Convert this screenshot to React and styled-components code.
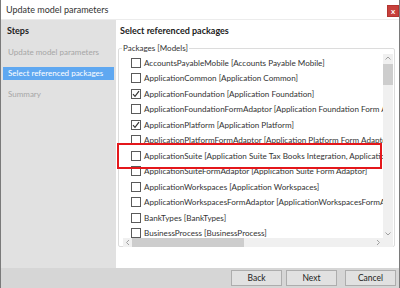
import React from 'react';
import styled, { createGlobalStyle } from 'styled-components';

const GlobalStyle = createGlobalStyle`
  html, body {
    margin: 0;
    padding: 0;
    background: #ffffff;
  }
  body {
    font-family: Lato, "Noto Sans", sans-serif;
  }
`;

const Window = styled.div`
  width: 400px;
  height: 288px;
  box-sizing: border-box;
  border-left: 1px solid #7a7a7a;
  border-right: 1px solid #7a7a7a;
  display: flex;
  flex-direction: column;
  overflow: hidden;
  position: relative;
  color: #222;
`;

const TitleBar = styled.div`
  height: 19px;
  flex: none;
  display: flex;
  align-items: center;
  justify-content: space-between;
  padding: 0 0 0 5px;
  border-bottom: 1px solid #ececec;
  font-size: 9px;
  color: #333;
`;

const CloseButton = styled.div`
  width: 12px;
  height: 12px;
  margin-top: 2px;
  background: #c7403c;
  color: #fff;
  font-size: 8px;
  font-weight: bold;
  line-height: 11px;
  text-align: center;
  border: 1px solid #b33430;
  box-sizing: border-box;
`;

const Body = styled.div`
  flex: 1;
  display: flex;
  min-height: 0;
`;

const Sidebar = styled.div`
  width: 115px;
  flex: none;
  background: #e1e1e1;
  padding: 4px 2px 0 2px;
  box-sizing: border-box;
`;

const SidebarTitle = styled.div`
  font-weight: bold;
  font-size: 9px;
  padding: 0 0 0 4px;
  height: 14px;
  line-height: 14px;
  margin-bottom: 8px;
`;

const StepItem = styled.div`
  height: 13px;
  line-height: 13px;
  font-size: 8px;
  padding-left: 5px;
  margin-bottom: 8px;
  white-space: nowrap;
  color: ${(p) => (p.active ? '#ffffff' : '#a6a6a6')};
  background: ${(p) => (p.active ? '#5fa8f1' : 'transparent')};
  width: 111px;
  box-sizing: border-box;
`;

const Content = styled.div`
  flex: 1;
  background: #ffffff;
  padding: 4px 4px 0 2px;
  display: flex;
  flex-direction: column;
  min-width: 0;
`;

const Heading = styled.div`
  font-weight: bold;
  font-size: 9px;
  height: 14px;
  line-height: 14px;
  padding-left: 2px;
  margin-bottom: 5px;
`;

const GroupBox = styled.fieldset`
  margin: 0;
  padding: 0 1px 2px 4px;
  border: 1px solid #dcdcdc;
  border-radius: 2px;
  height: 204px;
  box-sizing: border-box;
  min-width: 0;
`;

const Legend = styled.legend`
  font-size: 8px;
  padding: 0 1px;
  margin-left: -1px;
  color: #333;
  line-height: 10px;
`;

const ListBox = styled.div`
  position: relative;
  height: 193px;
  margin-top: 1px;
  display: grid;
  grid-template-columns: 1fr 10px;
  grid-template-rows: 1fr 9px;
  overflow: hidden;
`;

const Rows = styled.div`
  overflow: hidden;
  padding-left: 8px;
  padding-top: 1px;
`;

const Row = styled.div`
  height: 15.5px;
  display: flex;
  align-items: center;
  gap: 3px;
  white-space: nowrap;
  font-size: 8.1px;
  color: #333;
`;

const Box = styled.span`
  width: 10px;
  height: 10px;
  flex: none;
  border: 1px solid #5a5a5a;
  box-sizing: border-box;
  background: #fff;
  display: flex;
  align-items: center;
  justify-content: center;
`;

const VScroll = styled.div`
  background: #f0f0f0;
  display: flex;
  flex-direction: column;
  align-items: center;
`;

const HScroll = styled.div`
  background: #f0f0f0;
  display: flex;
  align-items: center;
`;

const Corner = styled.div`
  background: #f0f0f0;
`;

const Arrow = styled.div`
  width: 10px;
  height: 9px;
  flex: none;
  display: flex;
  align-items: center;
  justify-content: center;
`;

const VThumb = styled.div`
  width: 10px;
  height: 21px;
  background: #cdcdcd;
  margin-top: 1px;
`;

const Spacer = styled.div`
  flex: 1;
`;

const HThumb = styled.div`
  width: 112px;
  height: 9px;
  background: #cdcdcd;
  margin-left: -1px;
`;

const Highlight = styled.div`
  position: absolute;
  left: 116px;
  top: 143px;
  width: 265px;
  height: 26px;
  border: 2px solid #e4171b;
  box-sizing: border-box;
  pointer-events: none;
`;

const Footer = styled.div`
  height: 20px;
  flex: none;
  background: #d6d6d6;
  display: flex;
  justify-content: flex-end;
  align-items: center;
  padding-right: 3px;
  gap: 4px;
`;

const Button = styled.button`
  width: 51px;
  height: 16px;
  margin: 0;
  padding: 0;
  background: #e1e1e1;
  border: 1px solid #adadad;
  font-family: Lato, "Noto Sans", sans-serif;
  font-size: 8.5px;
  color: #222;
  margin-left: ${(p) => (p.gapBefore ? '4px' : '0')};
`;

const Check = () => (
  <svg width="8" height="8" viewBox="0 0 8 8">
    <path d="M1 4.2 L3 6.3 L7 1.2" fill="none" stroke="#333" strokeWidth="1.2" />
  </svg>
);

const Chevron = ({ dir }) => {
  const d = {
    up: 'M2.5 5.5 L5 3 L7.5 5.5',
    down: 'M2.5 3.5 L5 6 L7.5 3.5',
    left: 'M6 2 L3.5 4.5 L6 7',
    right: 'M4 2 L6.5 4.5 L4 7',
  }[dir];
  return (
    <svg width="10" height="9" viewBox="0 0 10 9">
      <path d={d} fill="none" stroke="#a0a0a0" strokeWidth="1" />
    </svg>
  );
};

const packages = [
  { name: 'AccountsPayableMobile [Accounts Payable Mobile]' },
  { name: 'ApplicationCommon [Application Common]' },
  { name: 'ApplicationFoundation [Application Foundation]', checked: true },
  { name: 'ApplicationFoundationFormAdaptor [Application Foundation Form Adaptor]' },
  { name: 'ApplicationPlatform [Application Platform]', checked: true },
  { name: 'ApplicationPlatformFormAdaptor [Application Platform Form Adaptor]' },
  { name: 'ApplicationSuite [Application Suite Tax Books Integration, Application Suite]' },
  { name: 'ApplicationSuiteFormAdaptor [Application Suite Form Adaptor]' },
  { name: 'ApplicationWorkspaces [Application Workspaces]' },
  { name: 'ApplicationWorkspacesFormAdaptor [ApplicationWorkspacesFormAdaptor]' },
  { name: 'BankTypes [BankTypes]' },
  { name: 'BusinessProcess [BusinessProcess]' },
];

export default function App() {
  return (
    <>
      <GlobalStyle />
      <Window>
        <TitleBar>
          <span>Update model parameters</span>
          <CloseButton>x</CloseButton>
        </TitleBar>
        <Body>
          <Sidebar>
            <SidebarTitle>Steps</SidebarTitle>
            <StepItem>Update model parameters</StepItem>
            <StepItem active>Select referenced packages</StepItem>
            <StepItem>Summary</StepItem>
          </Sidebar>
          <Content>
            <Heading>Select referenced packages</Heading>
            <GroupBox>
              <Legend>Packages [Models]</Legend>
              <ListBox>
                <Rows>
                  {packages.map((p, i) => (
                    <Row key={i}>
                      <Box>{p.checked && <Check />}</Box>
                      {p.name}
                    </Row>
                  ))}
                </Rows>
                <VScroll>
                  <Arrow><Chevron dir="up" /></Arrow>
                  <VThumb />
                  <Spacer />
                  <Arrow><Chevron dir="down" /></Arrow>
                </VScroll>
                <HScroll>
                  <Arrow><Chevron dir="left" /></Arrow>
                  <HThumb />
                  <Spacer />
                  <Arrow><Chevron dir="right" /></Arrow>
                </HScroll>
                <Corner />
              </ListBox>
            </GroupBox>
          </Content>
        </Body>
        <Footer>
          <Button>Back</Button>
          <Button>Next</Button>
          <Button gapBefore>Cancel</Button>
        </Footer>
        <Highlight />
      </Window>
    </>
  );
}
